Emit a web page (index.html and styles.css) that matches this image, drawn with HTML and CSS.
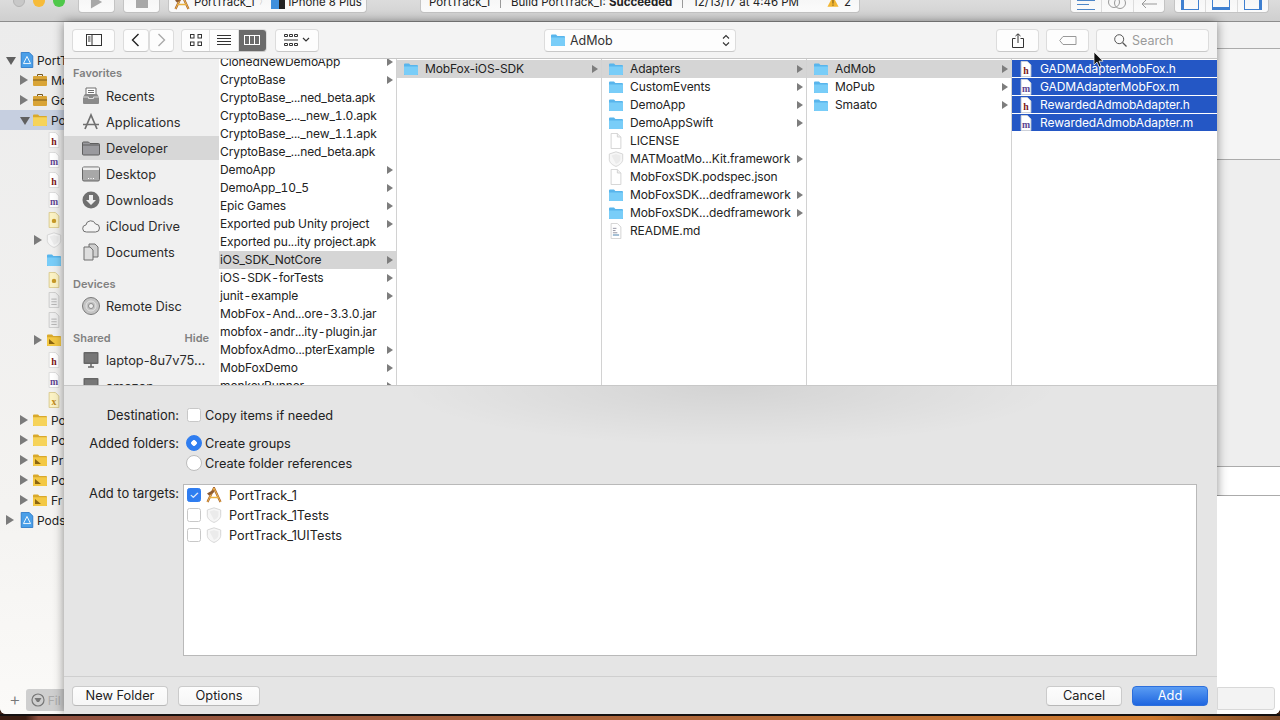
FILE: index.html
```html
<!DOCTYPE html>
<html lang="en">
<head>
  <meta charset="UTF-8" />
  <title>PortTrack_1 - Add files</title>
  <link rel="stylesheet" href="styles.css">
</head>
<body>
  <svg class="sprite" xmlns="http://www.w3.org/2000/svg">
    <symbol id="folder" viewBox="0 0 16 14"><path d="M1 2.500A1 1 0 0 1 2 1.500h4l1.400 1.400H14a1 1 0 0 1 1 1V13H1z" fill="#58b5ec"/><path d="M1 4.400h14V12a1 1 0 0 1-1 1H2a1 1 0 0 1-1-1z" fill="#79cdf8"/></symbol>
    <symbol id="yfolder" viewBox="0 0 16 14"><path d="M1 2.500A1 1 0 0 1 2 1.500h4l1.400 1.400H14a1 1 0 0 1 1 1V13H1z" fill="#d9a92c"/><path d="M1 4.200h14V12a1 1 0 0 1-1 1H2a1 1 0 0 1-1-1z" fill="#f6d35a"/></symbol>
    <symbol id="bfolder" viewBox="0 0 16 14"><path d="M1 2.500A1 1 0 0 1 2 1.500h4l1.400 1.400H14a1 1 0 0 1 1 1V13H1z" fill="#d9a92c"/><path d="M1 4.200h14V12a1 1 0 0 1-1 1H2a1 1 0 0 1-1-1z" fill="#f3c844"/><path d="M3 6v5h6z" fill="#8a6510"/></symbol>
    <symbol id="case" viewBox="0 0 16 14"><path d="M5.500 3V1.500h5V3" fill="none" stroke="#7a5a1a"/><rect x="1" y="3" width="14" height="10" rx="1" fill="#d9a436"/><path d="M1 7h14" stroke="#7a5a1a"/></symbol>
    <symbol id="doc" viewBox="0 0 16 18"><path d="M2.500.5h7l4 4v13h-11z" fill="#fff" stroke="#d0d0d0"/><path d="M9.500.5v4h4" fill="#f0f0f0" stroke="#d0d0d0"/></symbol>
    <symbol id="hdoc" viewBox="0 0 16 18"><path d="M2.500.5h7l4 4v13h-11z" fill="#fff" stroke="#d8d8d8"/><text x="8" y="14.500" text-anchor="middle" class="ltr" fill="#7c1616">h</text></symbol>
    <symbol id="mdoc" viewBox="0 0 16 18"><path d="M2.500.5h7l4 4v13h-11z" fill="#fff" stroke="#d8d8d8"/><text x="8" y="14.500" text-anchor="middle" class="ltr" fill="#5d4491">m</text></symbol>
    <symbol id="xdoc" viewBox="0 0 16 18"><path d="M2.500.5h7l4 4v13h-11z" fill="#fbf2c4" stroke="#d8c88a"/><text x="8" y="14.500" text-anchor="middle" class="ltr" fill="#c08a20">x</text></symbol>
    <symbol id="odoc" viewBox="0 0 16 18"><path d="M2.500.5h7l4 4v13h-11z" fill="#fbf2c4" stroke="#d8c88a"/><circle cx="8" cy="10" r="2.500" fill="#c89a28"/></symbol>
    <symbol id="gdoc" viewBox="0 0 16 18"><path d="M2.500.5h7l4 4v13h-11z" fill="#eee" stroke="#c8c8c8"/><path d="M5 8h6M5 11h6M5 14h6" stroke="#aaa"/></symbol>
    <symbol id="readme" viewBox="0 0 16 18"><path d="M2.500.5h7l4 4v13h-11z" fill="#fff" stroke="#cfcfcf"/><path d="M4.500 6h4M4.500 8.500h3M4.500 11h5" stroke="#8a8a9a"/><path d="M4.500 13.500h7" stroke="#9ab8d0" stroke-width="2"/></symbol>
    <symbol id="shield" viewBox="0 0 16 16"><path d="M8 .8l6.700 2.200v5.500c0 3-3.200 5.700-6.700 6.900C4.500 14.200 1.300 11.500 1.300 8.500V3z" fill="#f6f6f6" stroke="#d6d6d6"/><path d="M3.500 4.500L8 3l4.500 1.500v3.500c0 2-2 4-4.500 5z" fill="#ebebeb"/></symbol>
    <symbol id="project" viewBox="0 0 16 18"><path d="M1.500.5h9l4 4v13h-13z" fill="#4a9fe8" stroke="#2a78c8"/><path d="M8 5l4 8H4z" fill="none" stroke="#fff"/></symbol>
    <symbol id="xc" viewBox="0 0 16 16"><path d="M1.500 15L8 1 14.500 15" fill="none" stroke="#a8602c" stroke-width="2.200"/><path d="M1.500 15L8 1 14.500 15" fill="none" stroke="#f0c050" stroke-width=".9"/><path d="M3.500 10.500h9" stroke="#e8b040" stroke-width="1.500"/><path d="M1 6.500L7 3l1.500 2-5.500 3.500z" fill="#8c5a30"/></symbol>
    <symbol id="s-recents" viewBox="0 0 18 18"><path d="M4 1h10v9H4z" fill="#fff" stroke="#6f6f6f"/><path d="M6 3.500h6M6 5.500h6M6 7.500h6" stroke="#6f6f6f"/><path d="M1 10l2-3h12l2 3v6a1 1 0 0 1-1 1H2a1 1 0 0 1-1-1z" fill="#8a8a8a"/><path d="M1 10h5.500v1.500h5V10H17" fill="none" stroke="#dcdcdc"/></symbol>
    <symbol id="s-apps" viewBox="0 0 18 18"><path d="M3 16L9 2l6 14" fill="none" stroke="#707070" stroke-width="1.700"/><path d="M1 11.500h16" stroke="#707070" stroke-width="1.500"/></symbol>
    <symbol id="s-folder" viewBox="0 0 18 15"><path d="M.5 2.500a1 1 0 0 1 1-1h5l1.500 1.500h8.500a1 1 0 0 1 1 1V13.500a1 1 0 0 1-1 1h-15a1 1 0 0 1-1-1z" fill="#9a9a9e" stroke="#5f5f5f"/><path d="M.5 4.500h17" stroke="#5f5f5f"/></symbol>
    <symbol id="s-desktop" viewBox="0 0 18 15"><rect x=".5" y=".5" width="17" height="14" rx="1.500" fill="#a8a8a8" stroke="#666"/><rect x="1" y="1" width="16" height="2.500" fill="#eee"/><path d="M6 12h1M8.500 12h1M11 12h1" stroke="#fff"/></symbol>
    <symbol id="s-down" viewBox="0 0 18 18"><circle cx="9" cy="9" r="8.500" fill="#6f6f6f"/><path d="M7 4h4v5h3l-5 5-5-5h3z" fill="#eee"/></symbol>
    <symbol id="s-cloud" viewBox="0 0 18 14"><path d="M4.500 13a3.500 3.500 0 0 1-.6-7A5 5 0 0 1 13.500 5a4 4 0 0 1 0 8z" fill="#f4f4f4" stroke="#6f6f6f"/></symbol>
    <symbol id="s-docs" viewBox="0 0 18 18"><path d="M7 1h6l3 3v10H7z" fill="#cfcfcf" stroke="#6f6f6f"/><path d="M2 4h6l3 3v10H2z" fill="#dedede" stroke="#6f6f6f"/></symbol>
    <symbol id="s-disc" viewBox="0 0 18 18"><circle cx="9" cy="9" r="8.500" fill="#c4c4c4" stroke="#7a7a7a"/><circle cx="9" cy="9" r="5" fill="none" stroke="#e4e4e4"/><circle cx="9" cy="9" r="2.500" fill="#eee" stroke="#8a8a8a"/></symbol>
    <symbol id="s-monitor" viewBox="0 0 18 18"><rect x="1.500" y="1" width="15" height="12" rx="1" fill="#666"/><rect x="3" y="2.500" width="12" height="9" fill="#777"/><path d="M6 16h6M9 13v3" stroke="#666" stroke-width="1.500"/></symbol>
  </svg>

  <div class="xcode">
    <header class="x-toolbar">
      <div class="lights">
        <span class="light grey"></span><span class="light yellow"></span><span class="light green"></span>
      </div>
      <div class="x-btn run"><svg viewBox="0 0 14 14" class="run-ic"><path d="M1 0l12 7-12 7z" fill="#a8a8a8"/></svg></div>
      <div class="x-btn run"><span class="stop-ic"></span></div>
      <div class="x-btn scheme">
        <svg class="ic16"><use href="#xc"/></svg><span>PortTrack_1</span><span class="chev">〉</span>
        <span class="phone"></span><span>iPhone 8 Plus</span>
      </div>
      <div class="x-btn status">
        <span>PortTrack_1</span><i></i><span>Build PortTrack_1: <b>Succeeded</b></span><i></i><span>12/13/17 at 4:46 PM</span>
        <svg class="warn" width="14" height="13" viewBox="0 0 14 13"><path d="M7 .5l6.500 12H.5z" fill="#f2b632"/><path d="M7 4.500v4.500M7 10v1.500" stroke="#5a4310"/></svg><span>2</span>
      </div>
      <div class="x-btn seg editors">
        <span><em class="lines"></em></span>
        <span><em class="rings"></em><em class="rings second"></em></span>
        <span><svg width="18" height="14" viewBox="0 0 18 14"><path d="M17 9H2l4-4M2 9l4 4" fill="none" stroke="#999"/></svg></span>
      </div>
      <div class="x-btn seg panels">
        <span><em class="panel pleft"></em></span>
        <span><em class="panel pbottom"></em></span>
        <span><em class="panel pright"></em></span>
      </div>
    </header>

    <div class="x-body">
      <aside class="navigator">
        <div class="tree">
          <div class="node lv0 open"><svg class="ic16"><use href="#project"/></svg>PortT</div>
          <div class="node lv1 closed"><svg class="ic16"><use href="#case"/></svg>Mo</div>
          <div class="node lv1 closed"><svg class="ic16"><use href="#case"/></svg>Go</div>
          <div class="node lv1 open picked"><svg class="ic16"><use href="#yfolder"/></svg>Po</div>
          <div class="node lv2"><svg class="ic16"><use href="#hdoc"/></svg></div>
          <div class="node lv2"><svg class="ic16"><use href="#mdoc"/></svg></div>
          <div class="node lv2"><svg class="ic16"><use href="#hdoc"/></svg></div>
          <div class="node lv2"><svg class="ic16"><use href="#mdoc"/></svg></div>
          <div class="node lv2"><svg class="ic16"><use href="#odoc"/></svg></div>
          <div class="node lv2 closed"><svg class="ic16"><use href="#shield"/></svg></div>
          <div class="node lv2"><svg class="ic16"><use href="#folder"/></svg></div>
          <div class="node lv2"><svg class="ic16"><use href="#odoc"/></svg></div>
          <div class="node lv2"><svg class="ic16"><use href="#gdoc"/></svg></div>
          <div class="node lv2"><svg class="ic16"><use href="#gdoc"/></svg></div>
          <div class="node lv2 closed"><svg class="ic16"><use href="#bfolder"/></svg></div>
          <div class="node lv2"><svg class="ic16"><use href="#hdoc"/></svg></div>
          <div class="node lv2"><svg class="ic16"><use href="#mdoc"/></svg></div>
          <div class="node lv2"><svg class="ic16"><use href="#xdoc"/></svg></div>
          <div class="node lv1 closed"><svg class="ic16"><use href="#yfolder"/></svg>Po</div>
          <div class="node lv1 closed"><svg class="ic16"><use href="#yfolder"/></svg>Po</div>
          <div class="node lv1 closed"><svg class="ic16"><use href="#bfolder"/></svg>Pr</div>
          <div class="node lv1 closed"><svg class="ic16"><use href="#bfolder"/></svg>Po</div>
          <div class="node lv1 closed"><svg class="ic16"><use href="#bfolder"/></svg>Fr</div>
          <div class="node lv0 closed"><svg class="ic16"><use href="#project"/></svg>Pods</div>
        </div>
        <div class="filter-bar">
          <span class="plus">+</span>
          <div class="filter"><svg viewBox="0 0 14 14" class="filter-ic"><circle cx="7" cy="7" r="6" fill="none" stroke="#777" stroke-width="1.200"/><path d="M3.500 5h7L8 9H6z" fill="#777"/></svg>Fil</div>
        </div>
      </aside>

      <main class="sheet">
        <div class="sheet-bar">
          <button class="tb wide"><svg width="16" height="12" viewBox="0 0 16 12"><rect x=".5" y=".5" width="15" height="11" fill="none" stroke="#333"/><path d="M6 .5v11M2 3h2.500M2 5h2.500M2 7h2.500" stroke="#333"/></svg></button>
          <div class="tb-pair">
            <button class="tb nav"><svg width="9" height="14" viewBox="0 0 9 14"><path d="M7.500 1L1.500 7l6 6" fill="none" stroke="#222" stroke-width="1.400"/></svg></button>
            <button class="tb nav"><svg width="9" height="14" viewBox="0 0 9 14"><path d="M1.500 1l6 6-6 6" fill="none" stroke="#aaa" stroke-width="1.400"/></svg></button>
          </div>
          <div class="tb-seg">
            <button class="seg-btn"><svg width="12" height="12" viewBox="0 0 12 12"><g fill="none" stroke="#333"><rect x=".5" y=".5" width="3.500" height="3.500"/><rect x="8" y=".5" width="3.500" height="3.500"/><rect x=".5" y="8" width="3.500" height="3.500"/><rect x="8" y="8" width="3.500" height="3.500"/></g></svg></button>
            <button class="seg-btn"><svg width="14" height="12" viewBox="0 0 14 12"><path d="M0 1.500h14M0 4.500h14M0 7.500h14M0 10.500h14" stroke="#333"/></svg></button>
            <button class="seg-btn on"><svg width="16" height="10" viewBox="0 0 16 10"><rect x=".5" y=".5" width="15" height="9" fill="none" stroke="#fff"/><path d="M5.500 0v10M10.500 0v10" stroke="#fff"/></svg></button>
          </div>
          <button class="tb wide arrange"><svg width="14" height="12" viewBox="0 0 14 12"><g fill="none" stroke="#333"><path d="M.5.500h3v2h-3zM5.500.500h3v2h-3zM10.500.500h3v2h-3zM.5 9.500h3v2h-3zM5.500 9.500h3v2h-3zM10.500 9.500h3v2h-3z"/><path d="M0 6h14"/></g></svg><svg width="8" height="6" viewBox="0 0 8 6"><path d="M1 1l3 3 3-3" fill="none" stroke="#333" stroke-width="1.200"/></svg></button>
          <button class="tb path"><svg class="ic16"><use href="#folder"/></svg><span>AdMob</span><svg class="updown" width="8" height="13" viewBox="0 0 8 13"><path d="M1 4.500L4 1.500l3 3M1 8.500l3 3 3-3" fill="none" stroke="#333" stroke-width="1.100"/></svg></button>
          <button class="tb wide"><svg width="12" height="15" viewBox="0 0 12 15"><path d="M3.500 5.500H.5v9h11v-9h-3M6 10V1M3.500 3L6 .8 8.500 3" fill="none" stroke="#333"/></svg></button>
          <button class="tb wide"><svg width="18" height="9" viewBox="0 0 18 9"><path d="M4 .5h13v8H4L.7 4.500z" fill="none" stroke="#999"/></svg></button>
          <div class="search"><svg width="13" height="13" viewBox="0 0 13 13"><circle cx="5.200" cy="5.200" r="4.500" fill="none" stroke="#555"/><path d="M8.500 8.500l4 4" stroke="#555" stroke-width="1.200"/></svg>Search</div>
        </div>

        <div class="browser">
          <nav class="places">
            <h4>Favorites</h4>
            <a class="place"><svg class="ic18"><use href="#s-recents"/></svg>Recents</a>
            <a class="place"><svg class="ic18"><use href="#s-apps"/></svg>Applications</a>
            <a class="place active"><svg class="ic18"><use href="#s-folder"/></svg>Developer</a>
            <a class="place"><svg class="ic18"><use href="#s-desktop"/></svg>Desktop</a>
            <a class="place"><svg class="ic18"><use href="#s-down"/></svg>Downloads</a>
            <a class="place"><svg class="ic18"><use href="#s-cloud"/></svg>iCloud Drive</a>
            <a class="place"><svg class="ic18"><use href="#s-docs"/></svg>Documents</a>
            <h4 class="gap">Devices</h4>
            <a class="place"><svg class="ic18"><use href="#s-disc"/></svg>Remote Disc</a>
            <h4 class="gap shared">Shared<span>Hide</span></h4>
            <a class="place"><svg class="ic18"><use href="#s-monitor"/></svg>laptop-8u7v75...</a>
            <a class="place"><svg class="ic18"><use href="#s-monitor"/></svg>amazon</a>
          </nav>

          <div class="col first">
            <div class="scroll-up">
              <div class="row dir">ClonedNewDemoApp</div>
              <div class="row dir">CryptoBase</div>
              <div class="row">CryptoBase_...ned_beta.apk</div>
              <div class="row">CryptoBase_..._new_1.0.apk</div>
              <div class="row">CryptoBase_..._new_1.1.apk</div>
              <div class="row">CryptoBase_...ned_beta.apk</div>
              <div class="row dir">DemoApp</div>
              <div class="row dir">DemoApp_10_5</div>
              <div class="row dir">Epic Games</div>
              <div class="row dir">Exported pub Unity project</div>
              <div class="row">Exported pu...ity project.apk</div>
              <div class="row dir on">iOS_SDK_NotCore</div>
              <div class="row dir">iOS-SDK-forTests</div>
              <div class="row dir">junit-example</div>
              <div class="row">MobFox-And...ore-3.3.0.jar</div>
              <div class="row">mobfox-andr...ity-plugin.jar</div>
              <div class="row dir">MobfoxAdmo...pterExample</div>
              <div class="row dir">MobFoxDemo</div>
              <div class="row dir">monkeyRunner</div>
            </div>
          </div>

          <div class="col">
            <div class="row dir on"><svg class="ic16"><use href="#folder"/></svg>MobFox-iOS-SDK</div>
          </div>

          <div class="col">
            <div class="row dir on"><svg class="ic16"><use href="#folder"/></svg>Adapters</div>
            <div class="row dir"><svg class="ic16"><use href="#folder"/></svg>CustomEvents</div>
            <div class="row dir"><svg class="ic16"><use href="#folder"/></svg>DemoApp</div>
            <div class="row dir"><svg class="ic16"><use href="#folder"/></svg>DemoAppSwift</div>
            <div class="row"><svg class="ic16"><use href="#doc"/></svg>LICENSE</div>
            <div class="row dir"><svg class="ic16"><use href="#shield"/></svg>MATMoatMo...Kit.framework</div>
            <div class="row"><svg class="ic16"><use href="#doc"/></svg>MobFoxSDK.podspec.json</div>
            <div class="row dir"><svg class="ic16"><use href="#folder"/></svg>MobFoxSDK...dedframework</div>
            <div class="row dir"><svg class="ic16"><use href="#folder"/></svg>MobFoxSDK...dedframework</div>
            <div class="row"><svg class="ic16"><use href="#readme"/></svg>README.md</div>
          </div>

          <div class="col">
            <div class="row dir on"><svg class="ic16"><use href="#folder"/></svg>AdMob</div>
            <div class="row dir"><svg class="ic16"><use href="#folder"/></svg>MoPub</div>
            <div class="row dir"><svg class="ic16"><use href="#folder"/></svg>Smaato</div>
          </div>

          <div class="col last">
            <div class="row sel"><svg class="ic16"><use href="#hdoc"/></svg>GADMAdapterMobFox.h</div>
            <div class="row sel"><svg class="ic16"><use href="#mdoc"/></svg>GADMAdapterMobFox.m</div>
            <div class="row sel"><svg class="ic16"><use href="#hdoc"/></svg>RewardedAdmobAdapter.h</div>
            <div class="row sel"><svg class="ic16"><use href="#mdoc"/></svg>RewardedAdmobAdapter.m</div>
          </div>
        </div>

        <div class="options">
          <div class="opt-line dest">
            <label class="opt-label">Destination:</label>
            <span class="check"></span><span>Copy items if needed</span>
          </div>
          <div class="opt-line folders">
            <label class="opt-label">Added folders:</label>
            <span class="radio on"></span><span>Create groups</span>
          </div>
          <div class="opt-line refs">
            <label class="opt-label"></label>
            <span class="radio"></span><span>Create folder references</span>
          </div>
          <div class="targets">
            <label class="opt-label">Add to targets:</label>
            <div class="target-list">
              <div class="target"><span class="check on">✓</span><svg class="ic16"><use href="#xc"/></svg>PortTrack_1</div>
              <div class="target"><span class="check"></span><svg class="ic16"><use href="#shield"/></svg>PortTrack_1Tests</div>
              <div class="target"><span class="check"></span><svg class="ic16"><use href="#shield"/></svg>PortTrack_1UITests</div>
            </div>
          </div>
        </div>

        <footer class="sheet-foot">
          <button class="btn folder-btn">New Folder</button>
          <button class="btn options-btn">Options</button>
          <span class="spacer"></span>
          <button class="btn cancel-btn">Cancel</button>
          <button class="btn add-btn">Add</button>
        </footer>
      </main>

      <aside class="inspector">
        <div class="ins-top"></div>
        <div class="ins-mid"></div>
        <div class="ins-strip"></div>
        <div class="ins-rest"></div>
        <div class="ins-field"></div>
      </aside>
    </div>
  </div>
  <div class="wallpaper"></div>

  <!-- pointer sits over the toolbar -->
  <svg class="cursor" width="12" height="17" viewBox="0 0 12 17"><path d="M1 1v13l3-3 2.200 5 2-1-2.200-4.800H10z" fill="#111" stroke="#fff" stroke-width=".7"/></svg>
</body>
</html>
```
FILE: styles.css
```css
* {
  box-sizing: border-box;
}

html, body {
  margin: 0;
  padding: 0;
  height: 720px;
  overflow: hidden;
  font-family: 'Inter', 'Liberation Sans', sans-serif;
  font-size: 12px;
  color: #222;
  background: #3a1d12;
}

.sprite {
  display: none;
}

.ltr {
  font-family: 'Liberation Serif', serif;
  font-size: 11px;
  font-weight: bold;
}

.ic16 {
  width: 16px;
  height: 16px;
  flex: none;
}

.ic18 {
  width: 18px;
  height: 18px;
  flex: none;
}

button {
  font: inherit;
  color: inherit;
  padding: 0;
}

.xcode {
  height: 714px;
  display: flex;
  flex-direction: column;
  background: #f0f0f0;
  border-radius: 0 0 6px 6px;
  overflow: hidden;
}

/* Xcode toolbar, cut off by the top of the frame */
.x-toolbar {
  height: 22px;
  flex: none;
  display: flex;
  align-items: flex-start;
  background: linear-gradient(#dcdcdc, #cfcfcf);
  border-bottom: 1px solid #8d8d8d;
  overflow: hidden;
}

.lights {
  display: flex;
  gap: 8px;
  width: 78px;
  padding-left: 13px;
  margin-top: -5px;
}

.light {
  width: 12px;
  height: 12px;
  border-radius: 50%;
}

.light.grey { background: #c8c8c8; border: 1px solid #b4b4b4; }
.light.yellow { background: #f6bb3a; }
.light.green { background: #4fc84a; }

.x-btn {
  height: 22px;
  margin-top: -9px;
  background: linear-gradient(#f4f4f4, #fbfbfb);
  border: 1px solid #c4c4c4;
  border-top: none;
  border-radius: 4px;
  display: flex;
  align-items: center;
  white-space: nowrap;
  overflow: hidden;
}

.run {
  width: 37px;
  margin-right: 8px;
  justify-content: center;
}

.run-ic {
  width: 13px;
  height: 14px;
}

.stop-ic {
  width: 12px;
  height: 12px;
  background: #a8a8a8;
}

.scheme {
  width: 199px;
  gap: 4px;
  padding-left: 5px;
  font-size: 11.4px;
}

.chev {
  color: #999;
  font-size: 8px;
}

.phone {
  width: 14px;
  height: 14px;
  background: linear-gradient(90deg, #3f8fdc 60%, #222 60%);
}

.status {
  width: 440px;
  margin-left: 53px;
  padding: 0 8px;
  gap: 10px;
  font-size: 11.5px;
}

.status i {
  width: 1px;
  height: 12px;
  background: #999;
}

.warn {
  margin-left: 18px;
  margin-right: -5px;
}

.seg {
  width: 95px;
  padding: 0;
}

.seg > span {
  flex: 1;
  height: 100%;
  border-right: 1px solid #dcdcdc;
  display: flex;
  justify-content: center;
  align-items: center;
}

.seg > span:last-child {
  border-right: none;
}

.editors {
  margin-left: 210px;
}

.panels {
  margin-left: 9px;
}

.lines {
  width: 18px;
  height: 10px;
  margin-top: 6px;
  border-bottom: 1px solid #4d86c8;
  border-top: 1px solid #4d86c8;
  background: linear-gradient(#4d86c8, #4d86c8) left center / 12px 1px no-repeat;
}

.rings {
  width: 12px;
  height: 12px;
  border: 1px solid #999;
  border-radius: 50%;
}

.rings.second {
  margin-left: -6px;
  margin-top: 3px;
}

.panel {
  width: 18px;
  height: 16px;
  border: 1px solid #3e7fd0;
}

.pleft { border-left-width: 3px; }
.pbottom { border-bottom-width: 3px; }
.pright { border-right-width: 3px; }

.x-body {
  flex: 1;
  min-height: 0;
  display: flex;
}

/* project navigator behind the sheet */
.navigator {
  width: 64px;
  flex: none;
  display: flex;
  flex-direction: column;
  background: linear-gradient(#ececec, #f4f3f1 70%, #fbfaf8);
  overflow: hidden;
}

.tree {
  flex: 1;
  padding-top: 28px;
  white-space: nowrap;
}

.node {
  height: 20px;
  display: flex;
  align-items: center;
  gap: 3px;
  position: relative;
}

.node.lv0 { padding-left: 19px; gap: 2px; }
.node.lv1 { padding-left: 32px; }
.node.lv2 { padding-left: 46px; }
.node.picked { background: #c6cfe0; }

.node.closed::before,
.node.open::before {
  content: "";
  position: absolute;
  top: 5px;
  border-style: solid;
  border-color: transparent;
}

.node.closed::before {
  border-width: 5px 0 5px 8px;
  border-left-color: #7b7b7b;
}

.node.open::before {
  top: 7px;
  border-width: 8px 5px 0 5px;
  border-top-color: #606060;
}

.node.lv0::before { left: 6px; }
.node.lv1::before { left: 20px; }
.node.lv2::before { left: 34px; }

.filter-bar {
  height: 22px;
  flex: none;
  display: flex;
  align-items: flex-start;
  padding-left: 9px;
  gap: 5px;
  margin-bottom: 3px;
}

.plus {
  font-size: 18px;
  line-height: 22px;
  color: #777;
  font-weight: 300;
}

.filter {
  flex: 1;
  height: 22px;
  background: #cfcfcf;
  border-radius: 3px 0 0 3px;
  padding-left: 5px;
  display: flex;
  align-items: center;
  gap: 3px;
  color: #aaa;
  overflow: hidden;
}

.filter-ic {
  width: 14px;
  height: 14px;
  flex: none;
}

/* open panel sheet */
.sheet {
  width: 1153px;
  flex: none;
  display: flex;
  flex-direction: column;
  background: #e5e5e5;
  box-shadow: 0 0 10px rgba(0, 0, 0, 0.45);
  position: relative;
}

.sheet-bar {
  height: 37px;
  flex: none;
  display: flex;
  align-items: center;
  padding: 0 8px;
  background: #f3f3f3;
  border-bottom: 1px solid #c6c6c6;
}

.tb {
  height: 23px;
  background: #fdfdfd;
  border: 1px solid #dcdcdc;
  border-bottom-color: #c8c8c8;
  border-radius: 4px;
  display: flex;
  align-items: center;
  justify-content: center;
  flex: none;
}

.tb.wide {
  width: 43px;
}

.tb-pair {
  display: flex;
  margin-left: 8px;
}

.tb.nav {
  width: 25.5px;
}

.tb-seg {
  display: flex;
  margin-left: 7px;
  width: 86px;
  height: 23px;
  background: #fdfdfd;
  border: 1px solid #dcdcdc;
  border-bottom-color: #c8c8c8;
  border-radius: 4px;
  overflow: hidden;
}

.seg-btn {
  flex: 1;
  background: none;
  border: none;
  border-right: 1px solid #e2e2e2;
  display: flex;
  align-items: center;
  justify-content: center;
}

.seg-btn.on {
  background: #6a6a6a;
  border-right: none;
}

.tb.arrange {
  width: 44px;
  margin-left: 8px;
  gap: 4px;
}

.tb.path {
  width: 192px;
  margin-left: 225px;
  margin-right: 260px;
  justify-content: flex-start;
  padding-left: 5px;
  gap: 4px;
  font-size: 12.5px;
  color: #333;
}

.updown {
  margin-left: auto;
  margin-right: 5px;
}

.tb.wide + .tb.wide {
  margin-left: 7px;
}

.search {
  width: 113px;
  height: 23px;
  margin-left: 7px;
  background: #fbfbfb;
  border: 1px solid #dcdcdc;
  border-bottom-color: #c8c8c8;
  border-radius: 4px;
  display: flex;
  align-items: center;
  padding-left: 17px;
  gap: 5px;
  color: #9a9a9a;
  font-size: 12.5px;
}

.browser {
  height: 327px;
  flex: none;
  display: grid;
  grid-template-columns: 155px 177px 205px 205px 205px 206px;
  background: #fff;
  border-bottom: 1px solid #c8c8c8;
  overflow: hidden;
}

.places {
  background: #f0f0f0;
  padding-top: 6px;
  color: #2b2b2b;
  white-space: nowrap;
  overflow: hidden;
}

.places h4 {
  margin: 0 0 2px;
  height: 16px;
  line-height: 16px;
  padding-left: 9px;
  font-size: 11px;
  font-weight: 600;
  color: #808080;
}

.places h4.gap {
  margin-top: 11px;
  margin-bottom: 1px;
}

.shared {
  display: flex;
  justify-content: space-between;
  padding-right: 10px;
}

.place {
  height: 26px;
  display: flex;
  align-items: center;
  padding-left: 18px;
  gap: 6px;
  font-size: 12.8px;
}

.place.active {
  background: linear-gradient(transparent 1px, #d7d7d7 1px, #d7d7d7 25px, transparent 25px);
}

.col {
  border-left: 1px solid #d2d2d2;
  padding-top: 1px;
  min-width: 0;
  overflow: hidden;
}

.col.first {
  border-left: none;
  padding-top: 0;
  border-right: 1px solid #d2d2d2;
  margin-right: -1px;
}

.col.first + .col {
  border-left: none;
  margin-left: 1px;
}

.scroll-up {
  margin-top: -6px;
  font-variant-numeric: tabular-nums;
}

.scroll-up .row {
  padding-left: 1px;
}

.row {
  height: 18px;
  display: flex;
  align-items: center;
  gap: 6px;
  padding: 0 3px 2px 6px;
  letter-spacing: -0.1px;
  color: #222;
  white-space: nowrap;
  position: relative;
}

.row .ic16 {
  margin-bottom: -2px;
}

.row.on {
  background: #d5d5d5;
}

.row.dir::after {
  content: "";
  position: absolute;
  right: 3px;
  top: 5px;
  border-style: solid;
  border-color: transparent;
  border-width: 4px 0 4px 6px;
  border-left-color: #7d7d7d;
}

.row.sel {
  padding-bottom: 1px;
  background: #2457c5;
  color: #fff;
  border-bottom: 1px solid #fff;
}

.options {
  flex: 1;
  padding-top: 19px;
  display: flex;
  flex-direction: column;
  background: radial-gradient(ellipse 330px 60px at 666px 0, rgba(0, 0, 0, 0.08), rgba(0, 0, 0, 0) 100%);
  border-bottom: 1px solid #cfcfcf;
  font-size: 12.75px;
}

.opt-line {
  display: flex;
  align-items: center;
  height: 20px;
}

.opt-label {
  width: 115px;
  flex: none;
  text-align: right;
  margin-right: 8px;
  font-size: 12.9px;
}

.opt-line .check {
  margin-right: 4px;
}

.opt-line .radio {
  margin-right: 3px;
}

.folders {
  margin-top: 8px;
}

.check {
  width: 14px;
  height: 14px;
  flex: none;
  background: #fff;
  border: 1px solid #c8c8c8;
  border-radius: 2.5px;
  display: flex;
  align-items: center;
  justify-content: center;
  font-size: 11px;
  line-height: 1;
}

.check.on {
  background: #2f7df0;
  border-color: #2f7df0;
  color: #fff;
}

.radio {
  width: 16px;
  height: 16px;
  margin-left: -1px;
  flex: none;
  border-radius: 50%;
  background: #fff;
  border: 1px solid #bdbdbd;
}

.radio.on {
  background: radial-gradient(circle, #fff 0, #fff 2.5px, #2f7df0 3px);
  border-color: #2f7df0;
}

.targets {
  display: flex;
  align-items: flex-start;
  margin-top: 11px;
}

.targets .opt-label {
  margin-right: 4px;
  padding-top: 2px;
  line-height: 16px;
}

.target-list {
  width: 1014px;
  height: 172px;
  background: #fff;
  border: 1px solid #b9b9b9;
}

.target {
  height: 20px;
  display: flex;
  align-items: center;
  padding-left: 3px;
  gap: 5px;
}

.target .ic16 {
  margin-right: 2px;
}

.sheet-foot {
  height: 37px;
  flex: none;
  display: flex;
  align-items: center;
  padding: 0 9px 0 8px;
  gap: 10px;
}

.spacer {
  flex: 1;
}

.btn {
  height: 20px;
  padding-bottom: 1px;
  background: linear-gradient(#fdfdfd, #f6f6f6);
  border: 1px solid #cbcbcb;
  border-bottom-color: #b8b8b8;
  border-radius: 4px;
  font-size: 12.8px;
  color: #1c1c1c;
}

.folder-btn { width: 96px; }
.options-btn { width: 82px; }
.cancel-btn { width: 76px; }

.add-btn {
  width: 76px;
  background: linear-gradient(#5a9cf3, #1f66e0);
  border-color: #2d6fdc;
  color: #fff;
}

/* inspector behind the sheet */
.inspector {
  flex: 1;
  display: flex;
  flex-direction: column;
  background: #fff;
}

.ins-top {
  height: 27px;
  background: #f2f2f2;
  border-bottom: 1px solid #ababab;
}

.ins-mid {
  height: 111px;
  background: #f5f5f5;
  border-bottom: 1px solid #ababab;
}

.ins-strip {
  flex: none;
  height: 307px;
  background: #eeeeee;
  border-bottom: 1px solid #ababab;
}

.ins-rest {
  height: 29px;
  background: #fff;
  border-bottom: 1px solid #ababab;
}

.ins-field {
  flex: 1;
  background: #fff;
  position: relative;
}

.ins-field::after {
  content: "";
  position: absolute;
  left: 0;
  right: 5px;
  bottom: 4px;
  height: 21px;
  background: #f3f3f3;
  border: 1px solid #d8d8d8;
  border-radius: 0 3px 3px 0;
}

.wallpaper {
  height: 6px;
  border-top: 2px solid #141010;
  background: linear-gradient(90deg, #3a1d12 2%, #8f5040 3%, #b0683a 55%, #cf7a2e 90%, #7a4a2a);
}

.cursor {
  position: absolute;
  left: 1093px;
  top: 51px;
}
```
